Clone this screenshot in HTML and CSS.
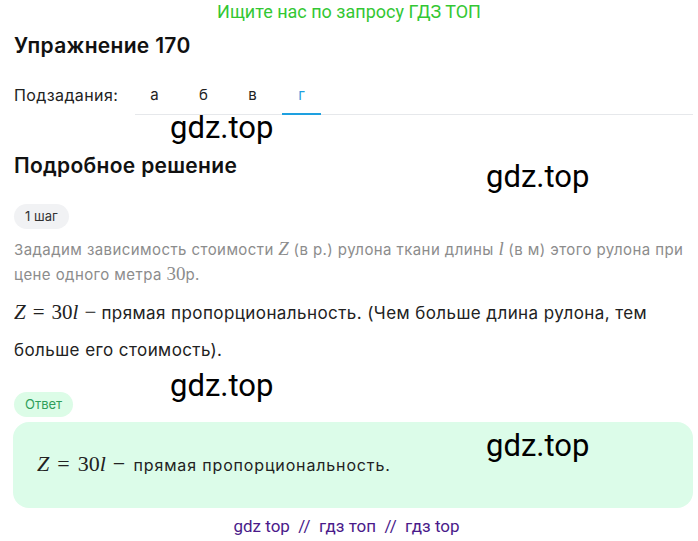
FILE: index.html
```html
<!DOCTYPE html>
<html lang="ru">
<head>
<meta charset="utf-8">
<link rel="stylesheet" href="styles.css">
</head>
<body>
<div class="banner">Ищите нас по запросу ГДЗ ТОП</div>
<main class="page">
  <h1 class="title">Упражнение 170</h1>
  <div class="subtasks">
    <span class="subtasks-label">Подзадания:</span>
    <div class="tabs">
      <span class="tab">а</span>
      <span class="tab">б</span>
      <span class="tab">в</span>
      <span class="tab active">г</span>
    </div>
  </div>
  <h2 class="section">Подробное решение</h2>
  <span class="pill pill-gray">1 шаг</span>
  <p class="muted">Зададим зависимость стоимости <span class="m mi">Z</span> (в р.) рулона ткани длины <span class="m mi">l</span> (в м) этого рулона при цене одного метра <span class="m">30</span>р.</p>
  <p class="body"><span class="math"><span class="mi">Z</span><span class="op">=</span>30<span class="mi">l</span><span class="op2">−</span></span> прямая пропорциональность. (Чем больше длина рулона, тем больше его стоимость).</p>
  <span class="pill pill-green">Ответ</span>
  <div class="answer"><span class="math"><span class="mi">Z</span><span class="op">=</span>30<span class="mi">l</span><span class="op2">−</span></span> прямая пропорциональность.</div>
  <div class="footer">gdz top &nbsp;//&nbsp; гдз топ &nbsp;//&nbsp; гдз top</div>
</main>
<div class="wm wm1">gdz.top</div>
<div class="wm wm2">gdz.top</div>
<div class="wm wm3">gdz.top</div>
<div class="wm wm4">gdz.top</div>
</body>
</html>
```

FILE: styles.css
```css
html, body { margin: 0; padding: 0; background: #fff; }
body { font-family: Inter, "Noto Sans", sans-serif; color: #1f2328; position: relative; width: 698px; height: 541px; overflow: hidden; }
.banner { font-family: Roboto, "Liberation Sans", sans-serif; font-size: 18px; color: #33c733; text-align: center; line-height: 22px; padding-top: 1px; }
.page { padding: 0 5px 0 14px; }
.title { font-size: 21px; font-weight: 600; margin: 10px 0 0; line-height: 26px; letter-spacing: 0.3px; color: #111; }
.subtasks { display: flex; align-items: stretch; margin-top: 23px; height: 33px; }
.subtasks-label { font-size: 16px; letter-spacing: 0.4px; color: #222; line-height: 26px; width: 116px; }
.tabs { display: flex; flex: 1; border-bottom: 1px solid #e6e8eb; margin-left: 5px; }
.tab { width: 49px; text-align: center; font-size: 15px; line-height: 26px; color: #222; position: relative; }
.tabs .tab:first-child { margin-left: -5px; }
.tab.active { color: #1ea0e0; }
.tab.active::after { content: ""; position: absolute; left: 5px; right: 5px; bottom: -1px; height: 2px; background: #1ea0e0; }
.section { font-size: 21px; font-weight: 600; margin: 38px 0 0; line-height: 26px; letter-spacing: 0.3px; color: #111; }
.pill { display: inline-block; font-size: 13px; border-radius: 13px; padding: 0 11px; line-height: 25px; }
.pill-gray { background: #f1f2f4; color: #333; margin-top: 25px; }
.muted { font-size: 15px; letter-spacing: 0.42px; color: #8c8c8c; line-height: 24px; margin: 8px 0 0; }
.m { font-family: "Liberation Serif", serif; font-size: 19px; letter-spacing: 0; }
.mi { font-family: "Liberation Serif", serif; font-style: italic; }
.body { font-size: 17px; letter-spacing: 0.42px; color: #222; line-height: 37px; margin: 7px 0 0; }
.math { font-family: "Liberation Serif", serif; font-size: 21px; letter-spacing: 0; }
.op { margin: 0 7px; }
.op2 { margin-left: 6px; }
.pill-green { background: #dcfce7; color: #2f9e5a; margin-top: 23px; }
.answer { background: #dcfce9; border-radius: 16px; margin: 5px 0 0 -1px; padding: 28px 24px 29px; font-size: 16px; letter-spacing: 0.85px; color: #222; line-height: 28px; }
.answer .math { font-size: 22px; }
.answer .op { margin: 0 8px; }
.answer .op2 { margin-left: 7px; margin-right: 3px; }
.footer { font-family: Roboto, "Liberation Sans", sans-serif; text-align: center; color: #4a1a8a; font-size: 17px; margin-top: 8px; margin-left: -14px; line-height: 20px; }
.wm { position: absolute; font-family: Roboto, "Liberation Sans", sans-serif; font-size: 31px; color: #000; line-height: 34px; }
.wm1 { left: 170px; top: 111px; }
.wm2 { left: 486px; top: 160px; }
.wm3 { left: 170px; top: 369px; }
.wm4 { left: 486px; top: 429px; }
```
